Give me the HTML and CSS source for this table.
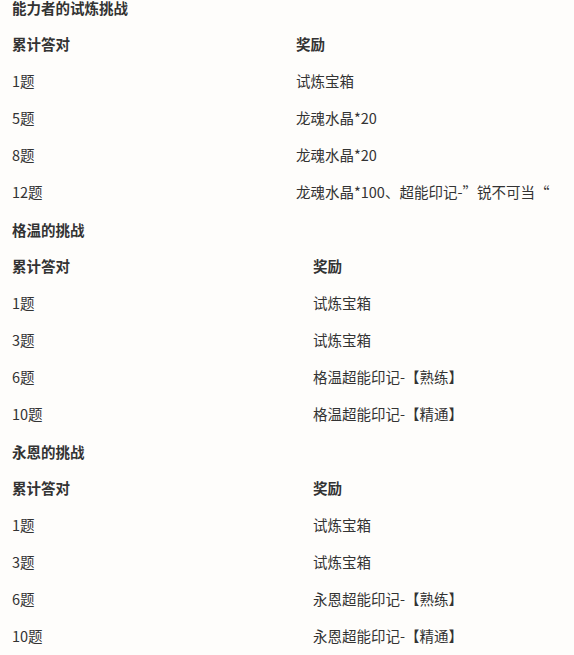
FILE: index.html
```html
<!DOCTYPE html>
<html lang="zh-CN">
<head>
<meta charset="utf-8">
<link rel="stylesheet" href="styles.css">
</head>
<body>
<div class="page">
  <section class="block">
    <h3 class="title">能力者的试炼挑战</h3>
    <div class="table t1">
      <div class="row head"><span>累计答对</span><span>奖励</span></div>
      <div class="row"><span>1题</span><span>试炼宝箱</span></div>
      <div class="row"><span>5题</span><span>龙魂水晶*20</span></div>
      <div class="row"><span>8题</span><span>龙魂水晶*20</span></div>
      <div class="row"><span>12题</span><span>龙魂水晶*100、超能印记-”锐不可当“</span></div>
    </div>
  </section>
  <section class="block">
    <h3 class="title">格温的挑战</h3>
    <div class="table t2">
      <div class="row head"><span>累计答对</span><span>奖励</span></div>
      <div class="row"><span>1题</span><span>试炼宝箱</span></div>
      <div class="row"><span>3题</span><span>试炼宝箱</span></div>
      <div class="row"><span>6题</span><span>格温超能印记-【熟练】</span></div>
      <div class="row"><span>10题</span><span>格温超能印记-【精通】</span></div>
    </div>
  </section>
  <section class="block">
    <h3 class="title">永恩的挑战</h3>
    <div class="table t2">
      <div class="row head"><span>累计答对</span><span>奖励</span></div>
      <div class="row"><span>1题</span><span>试炼宝箱</span></div>
      <div class="row"><span>3题</span><span>试炼宝箱</span></div>
      <div class="row"><span>6题</span><span>永恩超能印记-【熟练】</span></div>
      <div class="row"><span>10题</span><span>永恩超能印记-【精通】</span></div>
    </div>
  </section>
</div>
</body>
</html>
```
FILE: styles.css
```css
html, body {
  margin: 0;
  padding: 0;
  background: #fefdfb;
}
body {
  font-family: "Noto Sans CJK SC", "Noto Sans", sans-serif;
  font-size: 14.5px;
  color: #333333;
  overflow: hidden;
}
.page {
  padding-left: 12px;
}
.title {
  margin: 12px 0 10px;
  line-height: 15px;
  font-size: 14.5px;
  font-weight: bold;
  color: #333333;
}
.block:first-child .title {
  margin-top: 0;
}
.row {
  display: grid;
  height: 37px;
  line-height: 37px;
  white-space: nowrap;
}
.t1 .row {
  grid-template-columns: 284px 1fr;
}
.t2 .row {
  grid-template-columns: 301px 1fr;
}
.head {
  font-weight: bold;
}
```
